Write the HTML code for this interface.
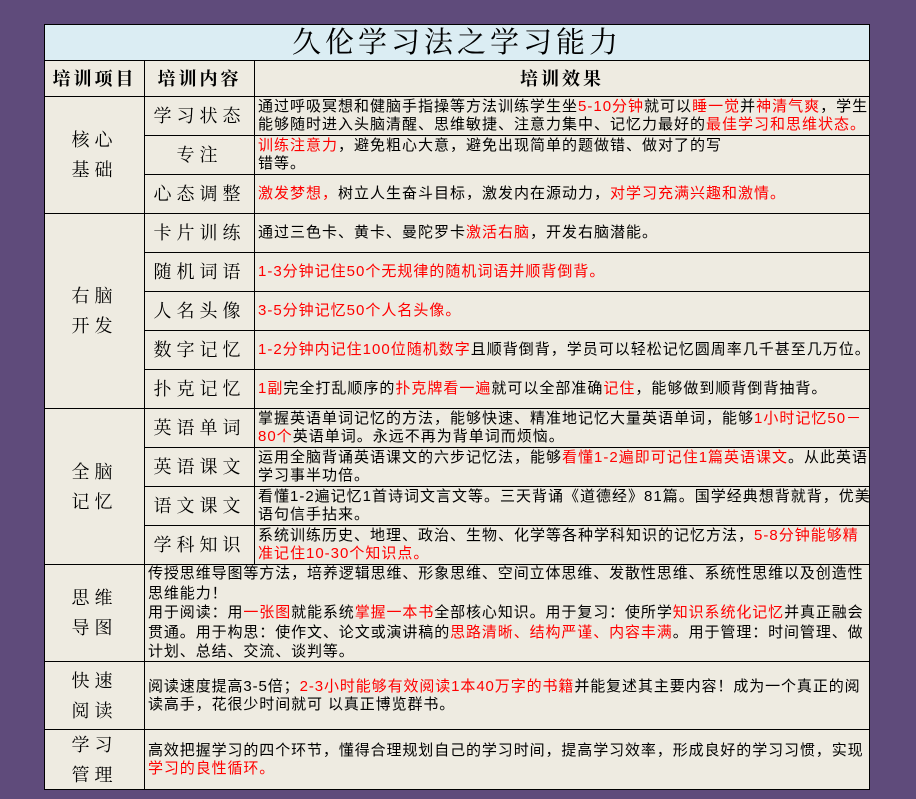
<!DOCTYPE html><html><head><meta charset="utf-8"><style>
body{margin:0;background:#5f4b7b;width:916px;height:799px;overflow:hidden;position:relative;font-family:"Liberation Sans","Noto Sans CJK SC",sans-serif}
.c{position:absolute;background:#eeebe1;border:1px solid #000;box-sizing:border-box;display:flex;align-items:center;overflow:hidden}
.l{justify-content:center;text-align:center;font-family:"Liberation Serif","Noto Serif CJK SC",serif;font-size:18px;letter-spacing:5px;line-height:30px;color:#000}
.t{font-size:15px;line-height:18px;padding-left:3px;white-space:nowrap;color:#000;letter-spacing:1px}
.w{letter-spacing:0.9px}
.r{color:#f00}
</style></head><body>
<div class="c l" style="left:44px;top:24px;width:826px;height:37px;background:#dbedf3;font-size:29px;letter-spacing:4px">久伦学习法之学习能力</div>
<div class="c l" style="left:44px;top:60px;width:101px;height:37px;font-weight:bold;letter-spacing:3px">培训项目</div>
<div class="c l" style="left:144px;top:60px;width:111px;height:37px;font-weight:bold;letter-spacing:3px">培训内容</div>
<div class="c l" style="left:254px;top:60px;width:616px;height:37px;font-weight:bold;letter-spacing:3px">培训效果</div>

<div class="c l" style="left:44px;top:96px;width:101px;height:118px">核心<br>基础</div>
<div class="c l" style="left:144px;top:96px;width:111px;height:40px">学习状态</div>
<div class="c t" style="left:254px;top:96px;width:616px;height:40px"><span>通过呼吸冥想和健脑手指操等方法训练学生坐<span class="r">5-10分钟</span>就可以<span class="r">睡一觉</span>并<span class="r">神清气爽</span>，学生<br>能够随时进入头脑清醒、思维敏捷、注意力集中、记忆力最好的<span class="r">最佳学习和思维状态。</span></span></div>
<div class="c l" style="left:144px;top:135px;width:111px;height:40px">专注</div>
<div class="c t" style="left:254px;top:135px;width:616px;height:40px"><span><span class="r">训练注意力</span>，避免粗心大意，避免出现简单的题做错、做对了的写<br>错等。</span></div>
<div class="c l" style="left:144px;top:174px;width:111px;height:40px">心态调整</div>
<div class="c t" style="left:254px;top:174px;width:616px;height:40px"><span><span class="r">激发梦想，</span>树立人生奋斗目标，激发内在源动力，<span class="r">对学习充满兴趣和激情。</span></span></div>

<div class="c l" style="left:44px;top:213px;width:101px;height:196px">右脑<br>开发</div>
<div class="c l" style="left:144px;top:213px;width:111px;height:40px">卡片训练</div>
<div class="c t" style="left:254px;top:213px;width:616px;height:40px"><span>通过三色卡、黄卡、曼陀罗卡<span class="r">激活右脑</span>，开发右脑潜能。</span></div>
<div class="c l" style="left:144px;top:252px;width:111px;height:40px">随机词语</div>
<div class="c t" style="left:254px;top:252px;width:616px;height:40px"><span class="r">1-3分钟记住50个无规律的随机词语并顺背倒背。</span></div>
<div class="c l" style="left:144px;top:291px;width:111px;height:40px">人名头像</div>
<div class="c t" style="left:254px;top:291px;width:616px;height:40px"><span class="r">3-5分钟记忆50个人名头像。</span></div>
<div class="c l" style="left:144px;top:330px;width:111px;height:40px">数字记忆</div>
<div class="c t" style="left:254px;top:330px;width:616px;height:40px"><span><span class="r">1-2分钟内记住100位随机数字</span>且顺背倒背，学员可以轻松记忆圆周率几千甚至几万位。</span></div>
<div class="c l" style="left:144px;top:369px;width:111px;height:40px">扑克记忆</div>
<div class="c t" style="left:254px;top:369px;width:616px;height:40px"><span><span class="r">1副</span>完全打乱顺序的<span class="r">扑克牌看一遍</span>就可以全部准确<span class="r">记住</span>，能够做到顺背倒背抽背。</span></div>

<div class="c l" style="left:44px;top:408px;width:101px;height:157px">全脑<br>记忆</div>
<div class="c l" style="left:144px;top:408px;width:111px;height:40px">英语单词</div>
<div class="c t" style="left:254px;top:408px;width:616px;height:40px"><span>掌握英语单词记忆的方法，能够快速、精准地记忆大量英语单词，能够<span class="r">1小时记忆50－</span><br><span class="r">80个</span>英语单词。永远不再为背单词而烦恼。</span></div>
<div class="c l" style="left:144px;top:447px;width:111px;height:40px">英语课文</div>
<div class="c t" style="left:254px;top:447px;width:616px;height:40px"><span>运用全脑背诵英语课文的六步记忆法，能够<span class="r">看懂1-2遍即可记住1篇英语课文</span>。从此英语<br>学习事半功倍。</span></div>
<div class="c l" style="left:144px;top:486px;width:111px;height:40px">语文课文</div>
<div class="c t" style="left:254px;top:486px;width:616px;height:40px"><span>看懂1-2遍记忆1首诗词文言文等。三天背诵《道德经》81篇。国学经典想背就背，优美<br>语句信手拈来。</span></div>
<div class="c l" style="left:144px;top:525px;width:111px;height:40px">学科知识</div>
<div class="c t" style="left:254px;top:525px;width:616px;height:40px"><span>系统训练历史、地理、政治、生物、化学等各种学科知识的记忆方法，<span class="r">5-8分钟能够精</span><br><span class="r">准记住10-30个知识点。</span></span></div>

<div class="c l" style="left:44px;top:564px;width:101px;height:98px">思维<br>导图</div>
<div class="c t w" style="left:144px;top:564px;width:726px;height:98px;line-height:19.5px"><span>传授思维导图等方法，培养逻辑思维、形象思维、空间立体思维、发散性思维、系统性思维以及创造性<br>思维能力！<br>用于阅读：用<span class="r">一张图</span>就能系统<span class="r">掌握一本书</span>全部核心知识。用于复习：使所学<span class="r">知识系统化记忆</span>并真正融会<br>贯通。用于构思：使作文、论文或演讲稿的<span class="r">思路清晰、结构严谨、内容丰满</span>。用于管理：时间管理、做<br>计划、总结、交流、谈判等。</span></div>

<div class="c l" style="left:44px;top:661px;width:101px;height:69px">快速<br>阅读</div>
<div class="c t w" style="left:144px;top:661px;width:726px;height:69px"><span>阅读速度提高3-5倍；<span class="r">2-3小时能够有效阅读1本40万字的书籍</span>并能复述其主要内容！成为一个真正的阅<br>读高手，花很少时间就可 以真正博览群书。</span></div>

<div class="c l" style="left:44px;top:729px;width:101px;height:61px">学习<br>管理</div>
<div class="c t w" style="left:144px;top:729px;width:726px;height:61px"><span>高效把握学习的四个环节，懂得合理规划自己的学习时间，提高学习效率，形成良好的学习习惯，实现<br><span class="r">学习的良性循环。</span></span></div>
</body></html>
